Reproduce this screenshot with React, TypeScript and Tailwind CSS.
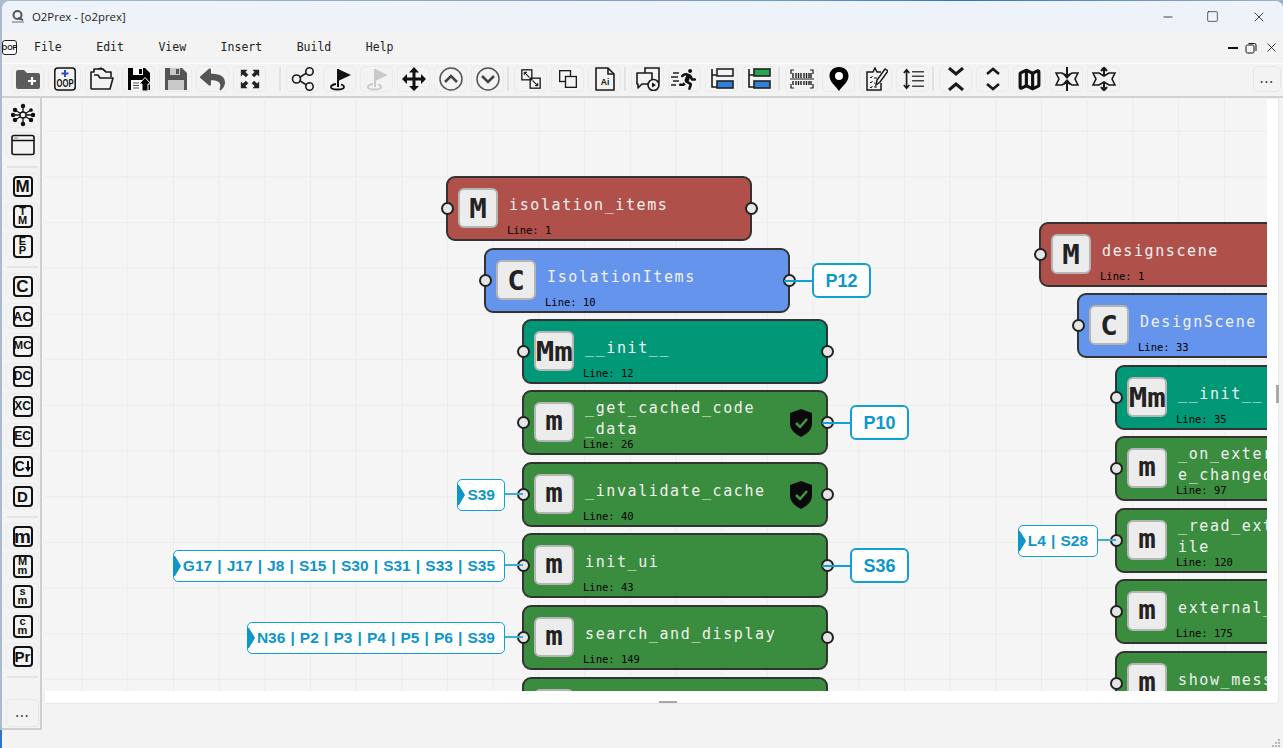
import type { ReactNode } from "react";
import { Map as MapIcon, Minus, Square, X } from "lucide-react";
import { FaReply, FaRunning } from "react-icons/fa";

const MONO = "font-['DejaVu_Sans_Mono',monospace]";
const SANS = "font-['Liberation_Sans',Arial,sans-serif]";

function Svg({ w = 24, h = 24, children }: { w?: number; h?: number; children: ReactNode }) {
  return (
    <svg width={w} height={h} viewBox="0 0 24 24" fill="none" stroke="#1a1a1a" strokeWidth="1.6">
      {children}
    </svg>
  );
}

const Floppy = ({ color, arrow }: { color: string; arrow?: boolean }) => (
  <Svg>
    <path d="M1 1h17l5 5v17H1z" fill={color} stroke="none" />
    <rect x="6" y="1" width="10" height="7" fill={arrow ? "#fff" : "#c9c9c9"} stroke="none" />
    <rect x="12" y="2" width="3" height="5" fill={color} stroke="none" />
    <rect x="4" y="13" width="16" height="10" fill={arrow ? "#fff" : "#c9c9c9"} stroke="none" />
    {arrow && (
      <>
        <path d="M6 16h6M6 18.5h6M6 21h6" stroke="#555" strokeWidth="1" />
        <path d="M18 10.5l6 6.5h-3v7h-6v-7h-3z" fill="#000" stroke="#fff" strokeWidth="1" />
      </>
    )}
  </Svg>
);

const Flag = ({ color }: { color: string }) => (
  <Svg>
    <path d="M10 2v18" stroke={color} strokeWidth="2" />
    <path d="M10 2l13 6-13 6z" fill={color} stroke="none" />
    <path d="M8 17c-3 .5-5 1.500-5 3 0 1.500 3 2.500 6.500 2.500s6.500-1 6.500-2.500c0-1-1-2-3-2.500" stroke={color} strokeWidth="1.800" />
  </Svg>
);

const CircleChevron = ({ up }: { up?: boolean }) => (
  <Svg>
    <circle cx="12" cy="12" r="11" stroke="#555" strokeWidth="1.500" />
    <path d={up ? "M6 15l6-6 6 6" : "M6 9l6 6 6-6"} stroke="#444" strokeWidth="2.600" />
  </Svg>
);

const TreeBars = ({ top, topFill }: { top: string; topFill: boolean }) => (
  <Svg>
    <path d="M2 2v18h5M2 8h5" strokeWidth="1.600" />
    <rect x="7" y="2" width="16" height="7" fill={topFill ? top : "none"} stroke="#222" />
    <rect x="7" y="14" width="16" height="7" fill="#2f80dc" stroke="#222" />
  </Svg>
);

const StarArrows = ({ out }: { out?: boolean }) => (
  <Svg>
    <path d="M1 6h6l5 3 5-3h6l-3 6 3 6h-6l-5-3-5 3H1l3-6z" strokeWidth="1.600" fill="#f3f3f3" />
    {out ? (
      <path d="M12 9V1M9 4l3-3.500L15 4M12 15v8M9 20l3 3.500 3-3.500" strokeWidth="2" />
    ) : (
      <path d="M12 0v10M9 7l3 3.500L15 7M12 24V14M9 17l3-3.500 3 3.500" strokeWidth="2" />
    )}
  </Svg>
);

const toolbarGroups: ReactNode[][] = [
  [
    <svg width="24" height="20" viewBox="0 0 24 20">
      <path d="M0 3a2 2 0 0 1 2-2h6l3 3h11a2 2 0 0 1 2 2v12a2 2 0 0 1-2 2H2a2 2 0 0 1-2-2z" fill="#5c5c5c" />
      <path d="M16 8v8M12 12h8" stroke="#fff" strokeWidth="2.200" />
    </svg>,
    <svg width="24" height="24" viewBox="0 0 24 24">
      <rect x="1.800" y="1" width="20.400" height="22" rx="3" fill="none" stroke="#111" strokeWidth="1.500" />
      <path d="M12 3v7M8.500 6.500h7" stroke="#2b4fc7" strokeWidth="2" />
      <text x="12" y="20" textAnchor="middle" fontFamily="Liberation Sans" fontWeight="700" fontSize="10" textLength="17" lengthAdjust="spacingAndGlyphs" fill="#111">OOP</text>
    </svg>,
    <Svg>
      <path d="M1 22V5h3V2h9l3 3h5v5" strokeLinejoin="round" />
      <path d="M1 22h19l3-11H10l-2-3H4" strokeLinejoin="round" />
      <path d="M8 2l3-1 5 4" strokeWidth="1.200" />
    </Svg>,
    <Floppy color="#000" arrow />,
    <Floppy color="#555" />,
    <FaReply size={25} color="#555" />,
    <svg width="20" height="20" viewBox="0 0 24 24" fill="#222">
      <path d="M1 1h8L6.500 3.500 10 7 7 10 3.500 6.500 1 9zM23 1v8l-2.500-2.500L17 10l-3-3 3.500-3.500L15 1zM1 23v-8l2.500 2.500L7 14l3 3-3.500 3.500L9 23zM23 23h-8l2.500-2.500L14 17l3-3 3.500 3.500L23 15z" />
    </svg>,
  ],
  [
    <Svg>
      <path d="M8.500 10.500l7-4.500M8.500 13.500l7 4.500" stroke="#222" />
      <circle cx="5.500" cy="12" r="4" />
      <circle cx="18.500" cy="4.500" r="3.700" />
      <circle cx="18.500" cy="19.500" r="3.700" />
    </Svg>,
    <Flag color="#111" />,
    <Flag color="#c9c9c9" />,
    <svg width="24" height="24" viewBox="0 0 24 24" fill="#111">
      <path d="M12 0l5 5.500h-3.500V10.500H19V7l5 5-5 5v-3.500h-5.500V19H17l-5 5-5-5h3.500v-5.500H5V17l-5-5 5-5v3.500h5.500V5.500H7z" />
    </svg>,
    <CircleChevron up />,
    <CircleChevron />,
  ],
  [
    <Svg w={20} h={20}>
      <rect x="1" y="1" width="12" height="12" />
      <rect x="11" y="11" width="12" height="12" />
      <path d="M4 4l6 6M4 4h3M4 4v3" strokeWidth="1.400" />
      <path d="M20 20l-6-6M20 20h-3M20 20v-3" strokeWidth="1.400" />
    </Svg>,
    <Svg w={20} h={20}>
      <rect x="2" y="2" width="13" height="13" />
      <rect x="9" y="9" width="13" height="13" fill="#f3f3f3" />
    </Svg>,
    <Svg>
      <path d="M3 1h12l6 6v16H3z" strokeLinejoin="round" />
      <path d="M15 1v6h6" />
      <text x="12" y="18" textAnchor="middle" fontFamily="Liberation Sans" fontWeight="700" fontSize="8.500" fill="#111" stroke="none">Ai</text>
    </Svg>,
  ],
  [
    <Svg>
      <path d="M1 6h15v11H6l-4 4 0-4H1z" strokeLinejoin="round" />
      <path d="M9 6V1h14v14h-3" />
      <circle cx="17.500" cy="18" r="5.500" fill="#f3f3f3" />
      <path d="M16 15.500l4 2.500-4 2.500z" fill="#111" stroke="none" />
    </Svg>,
    <div className="flex items-center">
      <svg width="8" height="18" viewBox="0 0 8 18" stroke="#222" strokeWidth="1.500">
        <path d="M2 3h6M0 7h7M2 11h6M0 15h5" />
      </svg>
      <FaRunning size={21} color="#111" className="-ml-[2px]" />
    </div>,
    <TreeBars top="#fff" topFill={false} />,
    <TreeBars top="#22a84f" topFill />,
  ],
  [
    <Svg>
      <path d="M1 7V3h3M20 3h3v4M1 17v4h3M20 21h3v-4" strokeWidth="1.200" />
      <path d="M0 12h24" strokeWidth="1" />
      <path d="M3 6v5M6 6v5M8.500 6v5M11 6v5M14 6v5M16.500 6v5M19 6v5M21 6v5M3 14v4M6 14v4M8.500 14v4M11 14v4M14 14v4M16.500 14v4M19 14v4M21 14v4" strokeWidth="1.400" />
    </Svg>,
    <Svg>
      <path d="M12 0C6 0 2.500 4.300 2.500 9c0 6 6.500 10.500 9.500 15 3-4.500 9.500-9 9.500-15C21.500 4.300 18 0 12 0z" fill="#000" stroke="none" />
      <circle cx="12" cy="9" r="4" fill="#fff" stroke="none" />
    </Svg>,
    <Svg>
      <path d="M17 5h-4l-2-4-2 4H3v18h14v-7" strokeWidth="1.500" />
      <path d="M6 10l1 1 1.500-2M6 15l1 1 1.500-2M6 20l1 1 1.500-2M10 11h3M10 16h1M10 20h3" strokeWidth="1" />
      <path d="M12 18l1-5 8-11 3 2-8 11z" fill="#f3f3f3" strokeWidth="1.500" />
    </Svg>,
    <Svg w={22} h={22}>
      <path d="M5 2v20M2 5.500L5 2l3 3.500M2 18.500L5 22l3-3.500" strokeWidth="1.800" />
      <path d="M11 4h13M11 9h13M11 14h13M11 20h13" stroke="#444" strokeWidth="1.600" />
    </Svg>,
  ],
  [
    <Svg>
      <path d="M5 1l7 6 7-6M5 23l7-6 7 6" strokeWidth="3" />
    </Svg>,
    <Svg>
      <path d="M6 7l6-5 6 5M6 17l6 5 6-5" strokeWidth="2.600" />
    </Svg>,
    <MapIcon size={25} strokeWidth={3} color="#111" />,
    <StarArrows />,
    <StarArrows out />,
  ],
];

type SideIcon = { lines: string[]; size: string; arrow?: boolean };
const sideGroups: SideIcon[][] = [
  [
    { lines: ["M"], size: "text-[17px]" },
    { lines: ["T", "M"], size: "text-[11px]" },
    { lines: ["E", "P"], size: "text-[11px]" },
  ],
  [
    { lines: ["C"], size: "text-[17px]" },
    { lines: ["AC"], size: "text-[13px]" },
    { lines: ["MC"], size: "text-[11.5px]" },
    { lines: ["DC"], size: "text-[12px]" },
    { lines: ["XC"], size: "text-[12px]" },
    { lines: ["EC"], size: "text-[12px]" },
    { lines: ["C"], size: "text-[14px]", arrow: true },
    { lines: ["D"], size: "text-[15px]" },
  ],
  [
    { lines: ["m"], size: "text-[19px]" },
    { lines: ["M", "m"], size: "text-[11px]" },
    { lines: ["s", "m"], size: "text-[11px]" },
    { lines: ["c", "m"], size: "text-[11px]" },
    { lines: ["Pr"], size: "text-[15px]" },
  ],
];

function SideButton({ children }: { children: ReactNode }) {
  return (
    <div className="w-[33px] h-[26px] rounded-[5px] border border-[#ebebeb] flex items-center justify-center">
      {children}
    </div>
  );
}

function Sidebar() {
  return (
    <div className="w-[40px] h-[632px] shrink-0 flex flex-col pt-[4px] pl-[4px] border-r-2 border-b-2 border-[#cfcfcf] bg-[#f3f3f3]">
      <div className="flex flex-col gap-[4px]">
        <SideButton>
          <svg width="24" height="24" viewBox="0 0 24 24" stroke="#111" strokeWidth="1.300" fill="#111">
            <path d="M12 12L12 3M12 12L12 21M12 12L4 7M12 12L20 7M12 12L4 17M12 12L20 17M12 12H2M12 12H22" />
            <circle cx="12" cy="12" r="3" fill="#f3f3f3" />
            <circle cx="12" cy="3" r="1.600" />
            <circle cx="12" cy="21" r="1.600" />
            <circle cx="4" cy="7" r="1.600" />
            <circle cx="20" cy="7" r="1.200" />
            <circle cx="4" cy="17" r="1.600" />
            <circle cx="20" cy="17" r="1.600" />
            <circle cx="2" cy="12" r="1.600" />
            <circle cx="22" cy="12" r="1.600" />
          </svg>
        </SideButton>
        <SideButton>
          <svg width="24" height="22" viewBox="0 0 24 22" fill="none" stroke="#111" strokeWidth="1.600">
            <rect x="1" y="1.500" width="22" height="19" rx="2" />
            <path d="M1 6.500h22" />
            <path d="M3.500 4h4" strokeWidth="1" strokeDasharray="1 1" />
          </svg>
        </SideButton>
      </div>
      {sideGroups.map((group, i) => (
        <div key={i}>
          <div className={`w-[31px] h-[2px] bg-[#e3e3e3] ml-px mb-[5px] ${i === 0 ? "mt-[8px]" : "mt-[7px]"}`} />
          <div className="flex flex-col gap-[4px]">
            {group.map((icon, j) => (
              <SideButton key={j}>
                <div className={`w-[20px] border-2 border-[#111] rounded-[4px] flex flex-col items-center justify-center font-bold text-[#111] ${SANS} ${icon.size} leading-[9.500px] ${icon.lines.length > 1 ? "h-[23px]" : "h-[21px]"}`}>
                  {icon.lines.length === 1 ? (
                    <span className="leading-none flex items-center">
                      {icon.lines[0]}
                      {icon.arrow && (
                        <svg width="6" height="11" viewBox="0 0 6 11" fill="#111">
                          <path d="M2 0h2v6h2l-3 5-3-5h2z" />
                        </svg>
                      )}
                    </span>
                  ) : (
                    icon.lines.map((l, k) => <span key={k}>{l}</span>)
                  )}
                </div>
              </SideButton>
            ))}
          </div>
        </div>
      ))}
      <div className="w-[31px] h-[2px] bg-[#e3e3e3] ml-px mt-[7px] mb-[21px]" />
      <div className="w-[33px] h-[28px] rounded-[5px] border border-[#e6e6e6] flex items-center justify-center text-[#333] text-[14px] leading-none tracking-[1px] pb-[3px]">
        ...
      </div>
    </div>
  );
}

type Node = {
  x: number;
  y: number;
  kind: "M" | "C" | "Mm" | "m";
  lines: string[];
  line: number;
  shield?: boolean;
  right?: string;
  left?: string;
};

const kindBg = {
  M: "bg-[#b0504a]",
  C: "bg-[#6494ec]",
  Mm: "bg-[#009877]",
  m: "bg-[#3a8d3e]",
};

const nodes: Node[] = [
  { x: 446, y: 176, kind: "M", lines: ["isolation_items"], line: 1 },
  { x: 484, y: 248, kind: "C", lines: ["IsolationItems"], line: 10, right: "P12" },
  { x: 522, y: 319, kind: "Mm", lines: ["__init__"], line: 12 },
  { x: 522, y: 390, kind: "m", lines: ["_get_cached_code", "_data"], line: 26, shield: true, right: "P10" },
  { x: 522, y: 462, kind: "m", lines: ["_invalidate_cache"], line: 40, shield: true, left: "S39" },
  { x: 522, y: 533, kind: "m", lines: ["init_ui"], line: 43, left: "G17 | J17 | J8 | S15 | S30 | S31 | S33 | S35", right: "S36" },
  { x: 522, y: 605, kind: "m", lines: ["search_and_display"], line: 149, left: "N36 | P2 | P3 | P4 | P5 | P6 | S39" },
  { x: 522, y: 677, kind: "m", lines: [""], line: 170 },
  { x: 1039, y: 222, kind: "M", lines: ["designscene"], line: 1 },
  { x: 1077, y: 293, kind: "C", lines: ["DesignScene"], line: 33 },
  { x: 1115, y: 365, kind: "Mm", lines: ["__init__"], line: 35 },
  { x: 1115, y: 436, kind: "m", lines: ["_on_external_fil", "e_changed"], line: 97 },
  { x: 1115, y: 508, kind: "m", lines: ["_read_external_f", "ile"], line: 120, left: "L4 | S28" },
  { x: 1115, y: 579, kind: "m", lines: ["external_update"], line: 175 },
  { x: 1115, y: 651, kind: "m", lines: ["show_message"], line: 190 },
];

function Port({ side }: { side: "left" | "right" }) {
  return (
    <div className={`absolute top-[26px] w-[13px] h-[13px] rounded-full bg-[#e6e6e6] border-2 border-[#222] ${side === "left" ? "-left-[5px]" : "-right-[6px]"}`} />
  );
}

function FlowNode({ node }: { node: Node }) {
  return (
    <div className="absolute w-[306px] h-[65px]" style={{ left: node.x - 45, top: node.y - 99 }}>
      <div className={`absolute inset-0 rounded-[9px] border-2 border-[#333] ${kindBg[node.kind]}`} />
      <div className={`absolute left-[12px] top-[12px] w-[40px] h-[40px] rounded-[6px] border-2 border-[#b5b5b5] bg-[#ececec] flex items-center justify-center text-[#222] font-bold text-[27px] leading-none ${MONO} ${node.kind === "m" ? "pb-[3px]" : ""}`}>
        <span className={`inline-block ${node.kind === "Mm" ? "scale-x-[1.14]" : "scale-x-[1.08]"}`}>{node.kind}</span>
      </div>
      <div className={`absolute left-[63px] top-[29px] -translate-y-1/2 text-[#f1f1f1] text-[15px] leading-[21px] tracking-[1.600px] whitespace-nowrap ${MONO}`}>
        {node.lines.map((l) => (
          <div key={l}>{l || "\u00a0"}</div>
        ))}
      </div>
      <div className={`absolute left-[61px] top-[47px] text-black text-[10.500px] leading-[14px] whitespace-nowrap ${MONO}`}>
        Line: {node.line}
      </div>
      {node.shield && (
        <svg className="absolute left-[267px] top-[19px]" width="24" height="28" viewBox="0 0 24 28">
          <path d="M12 0l11 4v10c0 7-5 11-11 14C6 25 1 21 1 14V4z" fill="#0a0a0a" />
          <path d="M7 14l4 4 7-8" fill="none" stroke="#3f9a44" strokeWidth="2.500" />
        </svg>
      )}
      <Port side="left" />
      <Port side="right" />
      {node.right && (
        <>
          <div className="absolute left-[300px] top-[32px] w-[28px] h-[2px] bg-[#12a0d2]" />
          <div className={`absolute left-[328px] top-[15px] w-[59px] h-[35px] rounded-[6px] border-2 border-[#12a0d2] bg-white flex items-center justify-center text-[#0d96ca] font-bold text-[18px] leading-none ${SANS}`}>
            {node.right}
          </div>
        </>
      )}
      {node.left && (
        <>
          <div className="absolute -left-[17px] top-[31px] w-[18px] h-[2px] bg-[#3aaed6]" />
          <div className={`absolute right-[323px] top-[17px] h-[32px] pl-[9px] pr-[9px] rounded-[5px] border-[1.500px] border-[#12a0d2] bg-white flex items-center text-[#0d96ca] font-bold text-[15.500px] leading-none whitespace-nowrap [word-spacing:0.800px] ${SANS}`}>
            <svg className="absolute -left-[1px] top-[5px]" width="8" height="20" viewBox="0 0 8 20">
              <path d="M0 0h2l6 10-6 10H0z" fill="#0d96ca" />
            </svg>
            {node.left}
          </div>
        </>
      )}
    </div>
  );
}

export default function App() {
  return (
    <div className="relative w-[1283px] h-[748px] overflow-hidden bg-[linear-gradient(90deg,#a9bbcd_0%,#6f9bd0_60%,#2f74c6_75%,#9fb2c6_100%)] pt-px pl-[2px]">
      <div className="w-full h-full rounded-t-[8px] overflow-hidden bg-[#f3f3f3] flex flex-col">
        {/* title bar */}
        <div className="h-[31px] shrink-0 bg-[#eef3f9] flex items-center text-[#222]">
          <svg className="ml-[8px]" width="16" height="16" viewBox="0 0 16 16" fill="none">
            <circle cx="7.500" cy="6" r="4" stroke="#555" strokeWidth="2" />
            <path d="M8 9l5 2" stroke="#555" strokeWidth="2" />
            <path d="M2 13h12" stroke="#999" strokeWidth="1.500" />
          </svg>
          <span className="ml-[6px] text-[11.400px] font-['Open_Sans',sans-serif]">O2Prex - [o2prex]</span>
          <div className="ml-auto flex items-center pr-[2px]">
            <Minus size={14} strokeWidth={1.300} color="#111" className="mr-[31px]" />
            <Square size={13} strokeWidth={1.200} color="#111" className="mr-[32px]" />
            <X size={16} strokeWidth={1.200} color="#111" className="mr-[14px]" />
          </div>
        </div>
        {/* menu */}
        <div className="h-[32px] shrink-0 flex items-center bg-[#f3f3f3] border-b border-[#fbfbfb]">
          <div className={`w-[15px] h-[15px] border border-[#222] rounded-[3px] flex items-center justify-center bg-white text-[#111] font-bold text-[7px] leading-none ${SANS}`}>
            OOP
          </div>
          <div className={`ml-[17px] flex gap-[34.500px] text-[11.500px] text-[#222] ${MONO}`}>
            {["File", "Edit", "View", "Insert", "Build", "Help"].map((m) => (
              <span key={m}>{m}</span>
            ))}
          </div>
          <div className="ml-auto flex items-center pr-[4px] gap-[7px]">
            <div className="w-[10px] h-[2px] bg-[#111]" />
            <svg width="12" height="12" viewBox="0 0 12 12" fill="none" stroke="#111">
              <rect x="1" y="3" width="8" height="8" rx="1.500" />
              <path d="M3.500 1.500h6a1.500 1.500 0 0 1 1.500 1.500v6" />
            </svg>
            <X size={15} strokeWidth={1.300} color="#111" />
          </div>
        </div>
        {/* toolbar */}
        <div className="h-[34px] shrink-0 flex items-center pl-[9px] pb-[2px] border-b-2 border-[#d2d2d2]">
          {toolbarGroups.map((group, i) => (
            <div key={i} className="flex items-center">
              {i > 0 && <div className={`w-[2px] h-[24px] bg-[#e2e2e2] mr-[5px] ${i === 1 ? "ml-[13px]" : "ml-[3px]"}`} />}
              <div className="flex gap-[4px]">
                {group.map((icon, j) => (
                  <div key={j} className="w-[33px] h-[26px] rounded-[5px] border border-[#ebebeb] flex items-center justify-center">
                    {icon}
                  </div>
                ))}
              </div>
            </div>
          ))}
          <div className="ml-auto mr-[2px] w-[28px] h-[26px] rounded-[5px] border border-[#e6e6e6] flex items-center justify-center text-[#333] text-[14px] leading-none tracking-[1px] pb-[3px]">
            ...
          </div>
        </div>
        {/* body */}
        <div className="relative flex-1 flex items-start">
          <Sidebar />
          <div className="ml-[3px] mt-px w-[1234px] h-[605px] shrink-0 bg-white rounded-br-[5px] border-b border-r border-[#e8e8e8] relative">
            <div className="relative w-[1222px] h-[592px] overflow-hidden bg-[#f5f5f5] bg-[linear-gradient(#ececec_1px,transparent_1px),linear-gradient(90deg,#ececec_1px,transparent_1px)] bg-[size:45.700px_45.700px] bg-[position:36.600px_31.700px]">
              {nodes.map((n, i) => (
                <FlowNode key={i} node={n} />
              ))}
            </div>
            <div className="absolute left-[1231px] top-[286px] w-[3px] h-[18px] bg-[#a8a8a8]" />
            <div className="absolute left-[614px] bottom-0 w-[18px] h-[2px] bg-[#a8a8a8]" />
          </div>
          <svg className="absolute right-[2px] bottom-0" width="10" height="10" viewBox="0 0 10 10" fill="#b5b5b5">
            <rect x="7" y="1" width="2" height="2" />
            <rect x="4" y="4" width="2" height="2" />
            <rect x="7" y="4" width="2" height="2" />
            <rect x="1" y="7" width="2" height="2" />
            <rect x="4" y="7" width="2" height="2" />
            <rect x="7" y="7" width="2" height="2" />
          </svg>
        </div>
      </div>
      <div className="absolute left-0 bottom-0 w-[2px] h-[18px] bg-[#2f74c6]" />
    </div>
  );
}
